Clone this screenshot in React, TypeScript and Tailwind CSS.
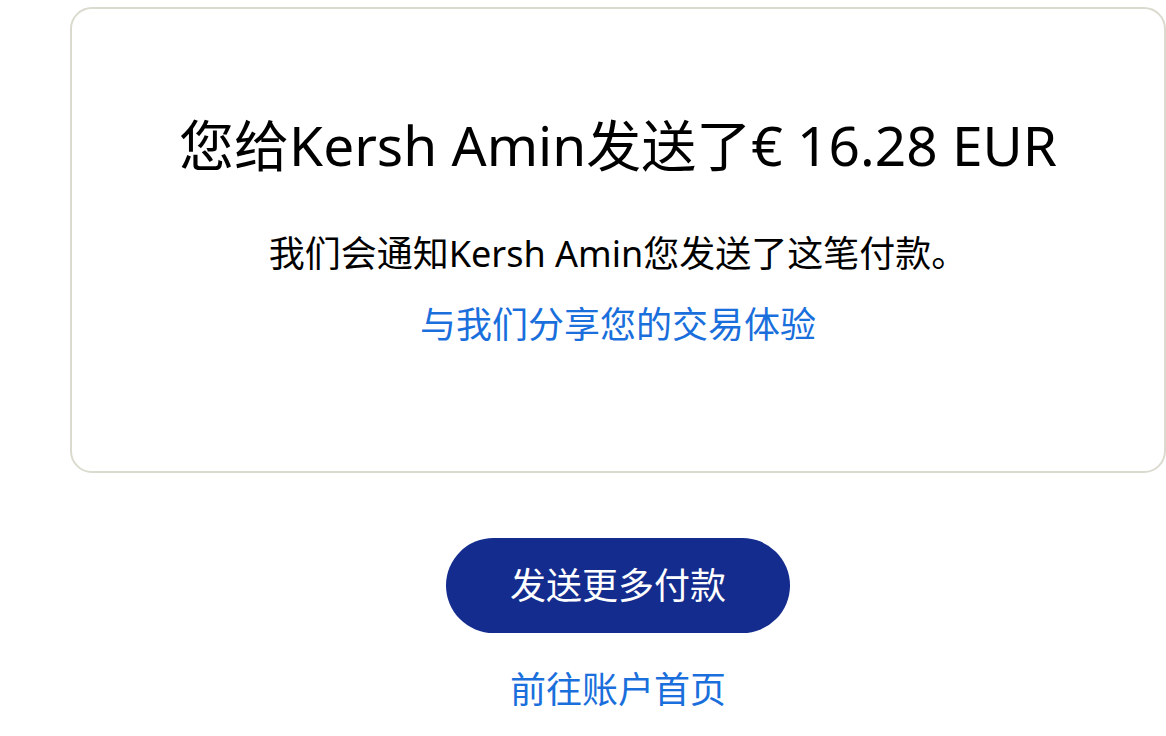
export default function App() {
  const font = { fontFamily: '"Noto Sans", "Noto Sans CJK SC", sans-serif' };
  return (
    <div className="min-h-screen bg-white" style={font}>
      <div className="ml-[70px] w-[1096px] pt-[7px] flex flex-col items-center">
        {/* confirmation card */}
        <div className="w-full h-[466px] rounded-[22px] border-2 border-[#dbdacf] flex flex-col items-center pt-[100px]">
          <h1 className="text-[55px] leading-[72px] text-black font-normal whitespace-nowrap">
            您给Kersh Amin发送了€ 16.28 EUR
          </h1>
          <p className="mt-[49px] text-[36px] leading-[48px] text-black whitespace-nowrap">
            我们会通知Kersh Amin您发送了这笔付款。
          </p>
          <a href="#" className="mt-[23px] text-[36px] leading-[48px] text-[#1a6fdc]">
            与我们分享您的交易体验
          </a>
        </div>

        <button className="mt-[65px] w-[344px] h-[95px] rounded-full bg-[#142c8e] text-white text-[36px]">
          发送更多付款
        </button>
        <a href="#" className="mt-[33px] text-[36px] leading-[48px] text-[#1a6fdc]">
          前往账户首页
        </a>
      </div>
    </div>
  );
}
